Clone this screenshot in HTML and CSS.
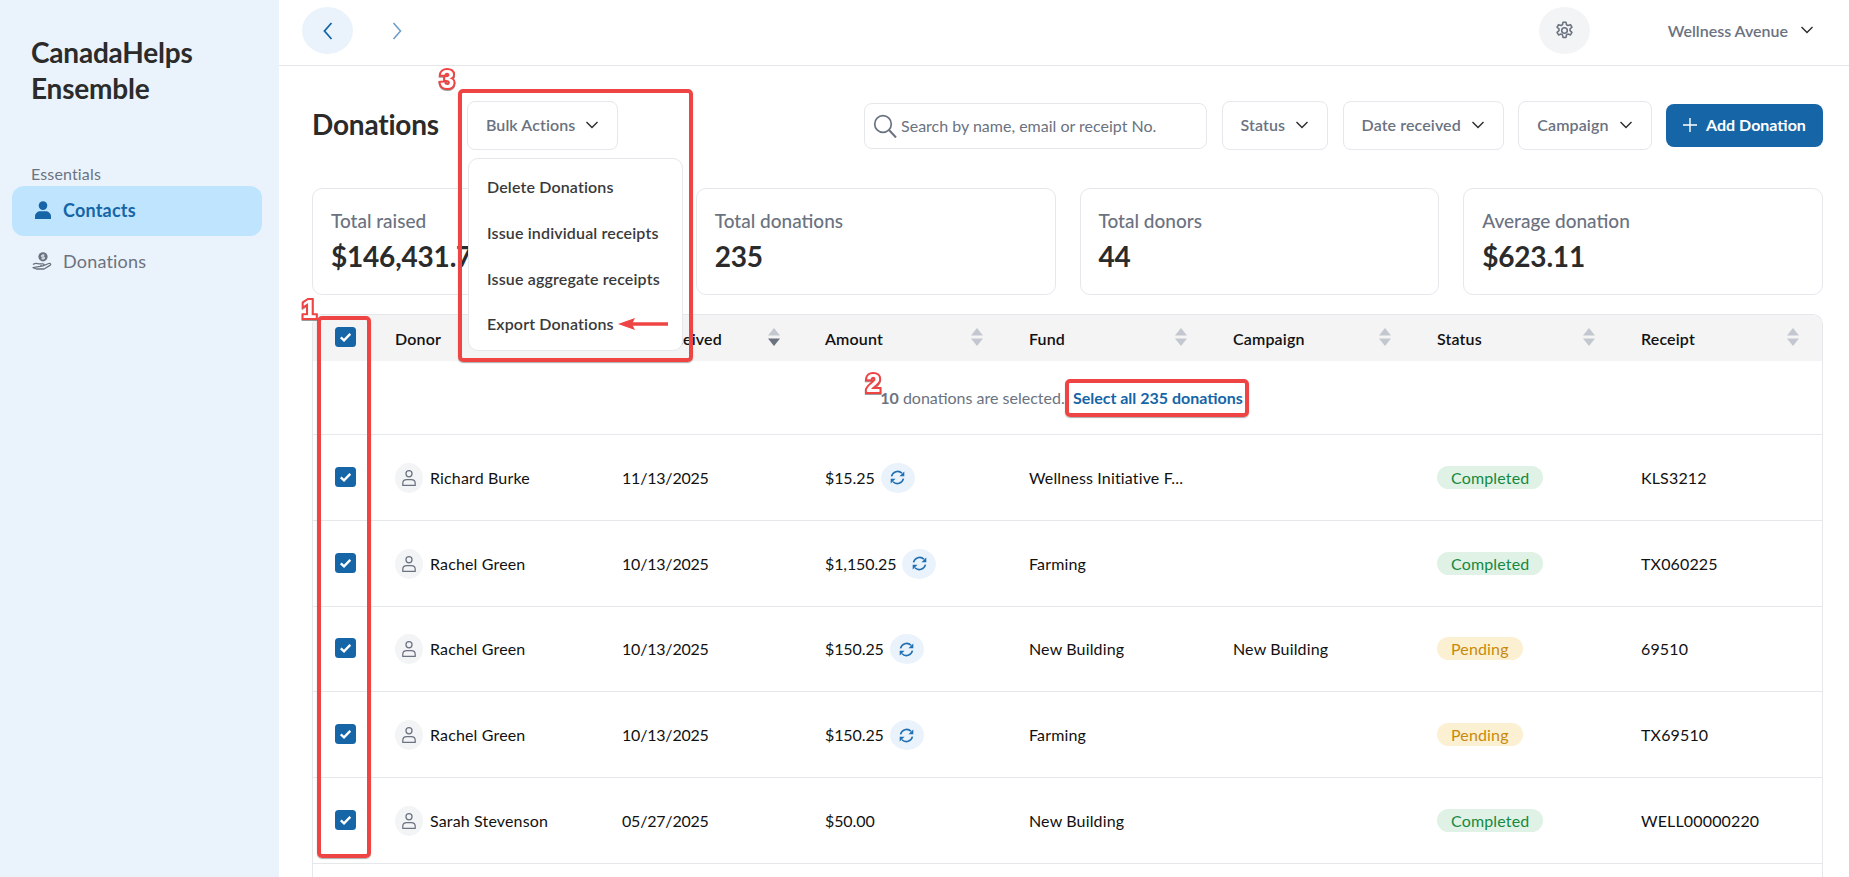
FILE: index.html
```html
<!DOCTYPE html>
<html lang="en">
<head>
<meta charset="utf-8">
<title>Donations</title>
<link rel="stylesheet" href="styles.css">
</head>
<body>
<svg class="defs" width="0" height="0" aria-hidden="true">
  <symbol id="chev" viewBox="0 0 14 8"><path d="M1.5 1 7 6.5 12.5 1" fill="none" stroke="currentColor" stroke-width="1.4"/></symbol>
  <symbol id="user" viewBox="0 0 18 20"><circle cx="9" cy="5.2" r="3.4" fill="none" stroke="currentColor" stroke-width="1.4"/><path d="M2 18.3v-2.2c0-2.700 2.200-4.300 4.500-4.300h5c2.300 0 4.500 1.600 4.500 4.300v2.200z" fill="none" stroke="currentColor" stroke-width="1.4" stroke-linejoin="round"/></symbol>
  <symbol id="sync" viewBox="0 0 20 20"><path d="M3 8.600A7.300 7.300 0 0 1 15.300 5" fill="none" stroke="currentColor" stroke-width="1.900"/><path d="M17 11.400A7.300 7.300 0 0 1 4.700 15" fill="none" stroke="currentColor" stroke-width="1.900"/><path d="M18 2.800v5.700h-5.700z M2 17.200v-5.700h5.700z" fill="currentColor"/></symbol>
  <symbol id="check" viewBox="0 0 21 20"><rect width="21" height="20" rx="3.500" fill="#1565a7"/><path d="M5.800 10.400 9 13.300 15.300 6.900" fill="none" stroke="#fff" stroke-width="2.400"/></symbol>
  <symbol id="sort" viewBox="0 0 12 18"><path d="M6 0 12 7.500H0z" fill="var(--up,#c3c7cf)"/><path d="M6 18 0 10.500H12z" fill="var(--down,#c3c7cf)"/></symbol>
</svg>

<div class="app">
  <aside class="sidebar">
    <h1 class="brand">CanadaHelps Ensemble</h1>
    <div class="nav-label">Essentials</div>
    <nav class="nav">
      <a class="nav-item active">
        <span class="nav-slot"><svg class="nav-icon-user" viewBox="0 0 18 18"><circle cx="9" cy="4.600" r="4.300" fill="currentColor"/><path d="M1 18v-2.500C1 12.300 3.600 10.300 6.500 10.300h5c2.900 0 5.500 2 5.500 5.200V18z" fill="currentColor"/></svg></span>
        Contacts
      </a>
      <a class="nav-item">
        <span class="nav-slot"><svg class="nav-icon-give" viewBox="0 0 21 18"><circle cx="11" cy="4.800" r="4.600" fill="currentColor"/><path d="M11 2.200v5.200M12.500 3.200H10.200a.9.900 0 0 0 0 1.800h1.600a.9.900 0 0 1 0 1.800H9.400" fill="none" stroke="#eaf3fb" stroke-width=".9"/><path d="M1 12.600c2-1.600 4-1.600 6-.7h4c1.300 0 1.300 1.900 0 1.900H8m3 0 5.700-2.300c1.700-.6 2.700 .9 1.300 1.900L12 17H4.500L1 15.600z" fill="none" stroke="currentColor" stroke-width="1.300" stroke-linejoin="round"/></svg></span>
        Donations
      </a>
    </nav>
  </aside>

  <main class="main">
    <header class="topbar">
      <div class="history">
        <button class="round round-blue"><svg class="arrow" viewBox="0 0 10 18"><path d="M8.500 1 1.500 9l7 8" fill="none" stroke="currentColor" stroke-width="1.800"/></svg></button>
        <button class="round round-plain"><svg class="arrow" viewBox="0 0 10 18"><path d="M1.500 1l7 8-7 8" fill="none" stroke="currentColor" stroke-width="1.600"/></svg></button>
      </div>
      <div class="account">
        <button class="round round-gray">
          <svg class="gear" viewBox="0 0 24 24" fill="none" stroke="currentColor" stroke-width="1.800" stroke-linejoin="round"><path d="M10.300 2.500h3.400l.6 2.900 1.700.9 2.800-1 1.700 3-2.200 1.900v2l2.200 1.900-1.700 3-2.800-1-1.700.9-.6 2.900h-3.400l-.6-2.900-1.700-.9-2.800 1-1.700-3 2.200-1.900v-2L3.500 8.300l1.700-3 2.800 1 1.700-.9z"/><circle cx="12" cy="12" r="3.200"/></svg>
        </button>
        <div class="org">Wellness Avenue <svg class="chev chev-dark"><use href="#chev"/></svg></div>
      </div>
    </header>

    <div class="content">
      <div class="toolbar">
        <div class="toolbar-left">
          <h2 class="page-title">Donations</h2>
          <button class="select-btn">Bulk Actions <svg class="chev"><use href="#chev"/></svg></button>
        </div>
        <div class="toolbar-right">
          <label class="search">
            <svg class="search-icon" viewBox="0 0 24 24"><circle cx="10" cy="10" r="8.300" fill="none" stroke="currentColor" stroke-width="1.700"/><path d="M16 16l7 7.500" fill="none" stroke="currentColor" stroke-width="2"/></svg>
            <span>Search by name, email or receipt No.</span>
          </label>
          <button class="select-btn">Status <svg class="chev"><use href="#chev"/></svg></button>
          <button class="select-btn">Date received <svg class="chev"><use href="#chev"/></svg></button>
          <button class="select-btn">Campaign <svg class="chev"><use href="#chev"/></svg></button>
          <button class="add-btn"><svg class="plus" viewBox="0 0 14 14"><path d="M7 0v14M0 7h14" stroke="currentColor" stroke-width="1.400"/></svg> Add Donation</button>
        </div>
      </div>

      <section class="stats">
        <div class="stat"><div class="stat-label">Total raised</div><div class="stat-value">$146,431.75</div></div>
        <div class="stat"><div class="stat-label">Total donations</div><div class="stat-value">235</div></div>
        <div class="stat"><div class="stat-label">Total donors</div><div class="stat-value">44</div></div>
        <div class="stat"><div class="stat-label">Average donation</div><div class="stat-value">$623.11</div></div>
      </section>

      <section class="table">
        <div class="row head">
          <div class="c-check"><svg class="checkbox"><use href="#check"/></svg></div>
          <div class="cell">Donor <svg class="sort"><use href="#sort"/></svg></div>
          <div class="cell">Date received <svg class="sort sort-active"><use href="#sort"/></svg></div>
          <div class="cell">Amount <svg class="sort"><use href="#sort"/></svg></div>
          <div class="cell">Fund <svg class="sort"><use href="#sort"/></svg></div>
          <div class="cell">Campaign <svg class="sort"><use href="#sort"/></svg></div>
          <div class="cell">Status <svg class="sort"><use href="#sort"/></svg></div>
          <div class="cell">Receipt <svg class="sort"><use href="#sort"/></svg></div>
        </div>
        <div class="notice"><b>10</b>&nbsp;donations are selected.&nbsp;&nbsp;<a class="select-all">Select all 235 donations</a></div>

        <div class="row">
          <div class="c-check"><svg class="checkbox"><use href="#check"/></svg></div>
          <div class="cell donor"><span class="avatar"><svg><use href="#user"/></svg></span>Richard Burke</div>
          <div class="cell date">11/13/2025</div>
          <div class="cell amount">$15.25 <span class="recur"><svg><use href="#sync"/></svg></span></div>
          <div class="cell">Wellness Initiative F...</div>
          <div class="cell"></div>
          <div class="cell"><span class="pill done">Completed</span></div>
          <div class="cell">KLS3212</div>
        </div>
        <div class="row">
          <div class="c-check"><svg class="checkbox"><use href="#check"/></svg></div>
          <div class="cell donor"><span class="avatar"><svg><use href="#user"/></svg></span>Rachel Green</div>
          <div class="cell date">10/13/2025</div>
          <div class="cell amount">$1,150.25 <span class="recur"><svg><use href="#sync"/></svg></span></div>
          <div class="cell">Farming</div>
          <div class="cell"></div>
          <div class="cell"><span class="pill done">Completed</span></div>
          <div class="cell">TX060225</div>
        </div>
        <div class="row">
          <div class="c-check"><svg class="checkbox"><use href="#check"/></svg></div>
          <div class="cell donor"><span class="avatar"><svg><use href="#user"/></svg></span>Rachel Green</div>
          <div class="cell date">10/13/2025</div>
          <div class="cell amount">$150.25 <span class="recur"><svg><use href="#sync"/></svg></span></div>
          <div class="cell">New Building</div>
          <div class="cell">New Building</div>
          <div class="cell"><span class="pill pending">Pending</span></div>
          <div class="cell">69510</div>
        </div>
        <div class="row">
          <div class="c-check"><svg class="checkbox"><use href="#check"/></svg></div>
          <div class="cell donor"><span class="avatar"><svg><use href="#user"/></svg></span>Rachel Green</div>
          <div class="cell date">10/13/2025</div>
          <div class="cell amount">$150.25 <span class="recur"><svg><use href="#sync"/></svg></span></div>
          <div class="cell">Farming</div>
          <div class="cell"></div>
          <div class="cell"><span class="pill pending">Pending</span></div>
          <div class="cell">TX69510</div>
        </div>
        <div class="row">
          <div class="c-check"><svg class="checkbox"><use href="#check"/></svg></div>
          <div class="cell donor"><span class="avatar"><svg><use href="#user"/></svg></span>Sarah Stevenson</div>
          <div class="cell date">05/27/2025</div>
          <div class="cell amount">$50.00</div>
          <div class="cell">New Building</div>
          <div class="cell"></div>
          <div class="cell"><span class="pill done">Completed</span></div>
          <div class="cell">WELL00000220</div>
        </div>
        <div class="row-empty"></div>
      </section>
    </div>
  </main>
</div>

<div class="menu">
  <div class="menu-item">Delete Donations</div>
  <div class="menu-item">Issue individual receipts</div>
  <div class="menu-item">Issue aggregate receipts</div>
  <div class="menu-item">Export Donations</div>
</div>

<div class="mark mark-col"></div>
<div class="mark mark-link"></div>
<div class="mark mark-menu"></div>
<span class="num num-1">1</span>
<span class="num num-2">2</span>
<span class="num num-3">3</span>
<svg class="mark-arrow" viewBox="0 0 50 14"><path d="M50 7H14" stroke="#ef4444" stroke-width="3.500"/><path d="M0 7 17 1 14 7l3 6z" fill="#ef4444"/></svg>
</body>
</html>
```
FILE: styles.css
```css
* { box-sizing: border-box; }
html, body { margin: 0; height: 100%; overflow: hidden; }
body { font-family: Lato, "Noto Sans", sans-serif; color: #2b2b2b; background: #fff; font-size: 16px; }
button { font: inherit; cursor: pointer; }
.defs { position: absolute; }

.app { display: flex; height: 877px; }

.sidebar { width: 279px; flex: none; background: #eaf3fb; padding: 34px 12px 0; }
.brand { margin: 0 0 58px 19px; font-size: 28px; line-height: 36px; font-weight: 700; letter-spacing: -.2px; color: #2b2b2b; width: 200px; }
.nav-label { margin-left: 19px; font-size: 16px; line-height: 20px; letter-spacing: .15px; color: #6b7280; height: 22px; }
.nav { display: flex; flex-direction: column; gap: 1px; }
.nav-item { display: flex; align-items: center; gap: 10px; height: 50px; width: 250px; padding: 0 0 2px 20px; border-radius: 12px; font-size: 18px; letter-spacing: .2px; color: #6b7280; }
.nav-item.active { background: #bfe5fe; color: #1565a7; font-weight: 700; }
.nav-slot { width: 21px; height: 18px; display: flex; justify-content: center; flex: none; }
.nav-icon-user { width: 18px; height: 18px; }
.nav-icon-give { width: 21px; height: 18px; }

.main { flex: 1; min-width: 0; }
.topbar { height: 66px; border-bottom: 1px solid #e5e7eb; display: flex; justify-content: space-between; align-items: flex-start; padding: 7px 26px 0 23px; }
.history, .account { display: flex; align-items: center; }
.history { gap: 18px; }
.round { width: 51px; height: 47px; border-radius: 50%; border: 0; padding: 0; display: flex; align-items: center; justify-content: center; background: transparent; }
.round-blue { background: #eaf3fb; color: #1565a7; }
.round-plain { color: #6f9fc9; }
.round-gray { background: #f3f4f6; color: #6b7280; }
.arrow { width: 10px; height: 18px; }
.gear { width: 21px; height: 21px; }
.account { gap: 78px; padding-right: 9px; }
.org { font-size: 16px; font-weight: 600; color: #6b7280; display: flex; align-items: center; gap: 12px; margin-top: -1px; }
.chev { width: 14px; height: 8px; color: #2b2b2b; flex: none; }

.content { padding: 35px 26px 0 33px; }
.toolbar { display: flex; align-items: center; justify-content: space-between; height: 49px; }
.toolbar-left, .toolbar-right { display: flex; align-items: center; }
.toolbar-left { gap: 28px; }
.toolbar-right { gap: 14.5px; }
.page-title { margin: 0 0 3px; font-size: 28px; font-weight: 700; letter-spacing: -.2px; color: #2b2b2b; }
.select-btn { height: 49px; padding: 0 18px 2px; display: flex; align-items: center; gap: 10px; background: #fff; border: 1px solid #e5e7eb; border-radius: 8px; font-size: 16px; letter-spacing: .1px; font-weight: 600; color: #6b7280; }
.search { width: 343px; height: 46px; border: 1px solid #e5e7eb; border-radius: 8px; display: flex; align-items: center; padding-left: 8px; gap: 4px; font-size: 16px; color: #6b7280; }
.search-icon { width: 24px; height: 24px; flex: none; }
.add-btn { width: 157px; height: 43px; padding: 0 0 2px; border: 0; border-radius: 8px; background: #1565a7; color: #fff; font-size: 16px; font-weight: 700; display: flex; align-items: center; justify-content: center; gap: 9px; }
.plus { width: 14px; height: 14px; }

.stats { display: grid; grid-template-columns: repeat(4, 1fr); gap: 24px; margin-top: 38px; }
.stat { height: 107px; border: 1px solid #e5e7eb; border-radius: 10px; padding: 20px 18px 0; }
.stat-label { font-size: 19px; line-height: 24px; color: #6b7280; font-weight: 500; }
.stat-value { font-size: 28px; line-height: 36px; font-weight: 700; letter-spacing: -.2px; color: #2b2b2b; margin-top: 5px; }

.table { margin-top: 19px; border: 1px solid #e5e7eb; border-bottom: 0; border-radius: 10px 10px 0 0; overflow: hidden; }
.row { display: grid; grid-template-columns: 82px 227px 203px repeat(4, 204px) 1fr; align-items: center; height: 85.8px; border-bottom: 1px solid #e5e7eb; font-size: 16px; letter-spacing: .15px; color: #111; }
.row.head { height: 46px; background: #f4f4f5; border-bottom: 0; font-weight: 600; }
.row-empty { height: 86px; }
.c-check { padding-left: 22px; display: flex; }
.checkbox { width: 21px; height: 20px; margin-top: -1px; }
.head .checkbox { margin-top: -2px; }
.cell { display: flex; align-items: center; min-width: 0; white-space: nowrap; position: relative; height: 100%; }
.date { letter-spacing: -.2px; }
.sort { width: 12px; height: 18px; position: absolute; left: 146px; top: 13px; }
.sort-active { --down: #6b7280; }
.notice { height: 74px; display: flex; align-items: center; justify-content: center; border-bottom: 1px solid #e5e7eb; font-size: 16px; color: #6b7280; padding-right: 12px; padding-bottom: 1px; }
.notice b { font-weight: 700; }
.select-all { color: #1565a7; font-weight: 700; }
.donor { gap: 7px; }
.avatar { width: 28px; height: 30px; margin-top: 1px; border-radius: 50%; background: #f3f4f6; color: #6b7280; display: flex; align-items: center; justify-content: center; }
.avatar svg { width: 16px; height: 18px; }
.amount { gap: 6px; letter-spacing: -.1px; }
.recur { width: 34px; height: 30px; margin-top: 1px; border-radius: 50%; background: #eaf3fb; color: #1f6fb2; display: flex; align-items: center; justify-content: center; }
.recur svg { width: 17px; height: 17px; }
.pill { display: inline-block; height: 23px; line-height: 24px; padding: 0 14px; border-radius: 12px; font-size: 16px; }
.done { background: #e0f2e6; color: #16893f; }
.pending { background: #fbf0d2; color: #c98a0c; }

/* Dropdown and the red review annotations lie over the page */
.menu { position: absolute; left: 468px; top: 158px; width: 215px; height: 193px; background: #fff; border: 1px solid #e5e7eb; border-radius: 10px; padding: 5px 0 0 18px; }
.menu-item { height: 45.7px; display: flex; align-items: center; font-size: 16px; letter-spacing: .15px; font-weight: 600; color: #3a3a3a; }

.mark { position: absolute; border: 4px solid #ef4444; border-radius: 5px; box-shadow: 0 1px 1px rgba(90,90,90,.5); }
.mark-col { left: 317px; top: 316px; width: 54px; height: 542px; }
.mark-link { left: 1065px; top: 379px; width: 184px; height: 38px; }
.mark-menu { left: 458px; top: 89px; width: 235px; height: 273px; }
.num { position: absolute; font-family: "Liberation Sans", sans-serif; font-weight: 700; font-size: 26px; line-height: 26px; color: #fff; -webkit-text-stroke: 4px #ef4444; paint-order: stroke fill; filter: drop-shadow(0 1px 0 rgba(90,90,90,.6)); }
.num-1 { left: 302px; top: 296px; }
.num-2 { left: 866px; top: 370px; }
.num-3 { left: 440px; top: 66px; }
.mark-arrow { position: absolute; left: 618px; top: 317px; width: 50px; height: 14px; }
```
